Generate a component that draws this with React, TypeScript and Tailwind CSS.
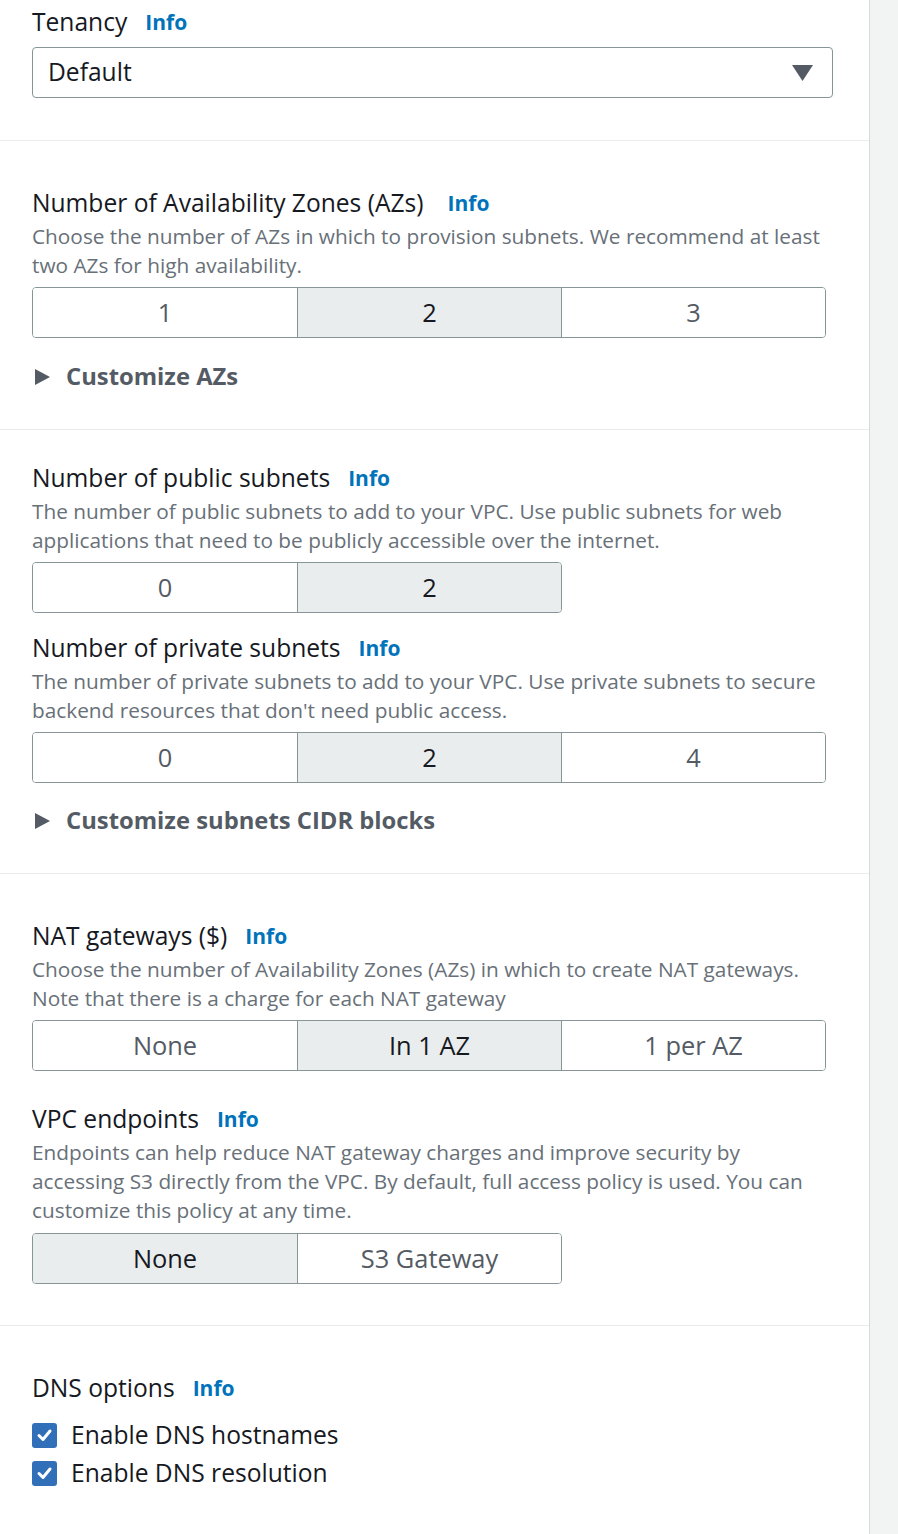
import React, { useState } from 'react';

const font = { fontFamily: '"Open Sans", "Noto Sans", sans-serif' };

function Label({ text, gap = 18 }: { text: string; gap?: number }) {
  return (
    <div className="flex items-center h-[30px]">
      <span className="text-[24.6px] text-[#16191f] leading-[30px]">{text}</span>
      <span
        className={(gap > 18 ? 'ml-[24px]' : 'ml-[18px]') + ' text-[21px] font-bold text-[#0073bb] leading-[30px]'}
      >
        Info
      </span>
    </div>
  );
}

function Desc({ children }: { children: React.ReactNode }) {
  return <p className="mt-[4px] max-w-[794px] text-[20.8px] leading-[29px] text-[#687078]">{children}</p>;
}

function Segmented({ options, selected }: { options: string[]; selected: number }) {
  const [value, setValue] = useState(selected);
  return (
    <div className="flex w-fit border border-[#879596] rounded-[4px] overflow-hidden">
      {options.map((o, i) => (
        <button
          key={o}
          onClick={() => setValue(i)}
          className={
            'w-[264px] h-[49px] text-[25.4px] flex items-center justify-center ' +
            (i > 0 ? 'border-l border-[#879596] ' : '') +
            (i === value ? 'bg-[#eaeded] text-[#16191f]' : 'bg-white text-[#545b64]')
          }
        >
          {o}
        </button>
      ))}
    </div>
  );
}

function Expander({ text }: { text: string }) {
  return (
    <div className="flex items-center h-[30px]">
      <svg width="17" height="18" viewBox="0 0 17 18" className="ml-[2px]">
        <path d="M1 1 L16 9 L1 17 Z" fill="#545b64" />
      </svg>
      <span className="ml-[15px] text-[23.8px] font-bold text-[#545b64]">{text}</span>
    </div>
  );
}

function Checkbox({ label }: { label: string }) {
  const [checked, setChecked] = useState(true);
  return (
    <button onClick={() => setChecked(!checked)} className="flex items-center h-[30px]">
      <span
        className={
          'w-[25px] h-[25px] rounded-[3px] flex items-center justify-center ' +
          (checked ? 'bg-[#3170b9]' : 'border-2 border-[#879596] bg-white')
        }
      >
        {checked && (
          <svg width="17" height="17" viewBox="0 0 17 17">
            <path d="M3 8.5 L7 12.5 L14 4" fill="none" stroke="white" strokeWidth="3" strokeLinecap="round" strokeLinejoin="round" />
          </svg>
        )}
      </span>
      <span className="ml-[14px] text-[24.6px] text-[#16191f]">{label}</span>
    </button>
  );
}

export default function App() {
  return (
    <div className="flex h-[1534px] bg-white" style={font}>
      <div className="w-[869px] shrink-0">
        {/* Tenancy */}
        <div className="px-[32px] pt-[7px] pb-[42px] border-b border-[#eaeded]">
          <Label text="Tenancy" />
          <div className="mt-[10px] w-[801px] h-[51px] border border-[#879596] rounded-[4px] flex items-center justify-between pl-[15px] pr-[19px]">
            <span className="text-[24.6px] text-[#16191f]">Default</span>
            <svg width="21" height="16" viewBox="0 0 21 16">
              <path d="M0 0 H21 L10.5 16 Z" fill="#545b64" />
            </svg>
          </div>
        </div>

        {/* AZs */}
        <div className="px-[32px] pt-[47px] pb-[37px] border-b border-[#eaeded]">
          <Label text="Number of Availability Zones (AZs)" gap={24} />
          <Desc>
            Choose the number of AZs in which to provision subnets. We recommend at least two AZs for high
            availability.
          </Desc>
          <div className="mt-[7px]">
            <Segmented options={['1', '2', '3']} selected={1} />
          </div>
          <div className="mt-[24px]">
            <Expander text="Customize AZs" />
          </div>
        </div>

        {/* Subnets */}
        <div className="px-[32px] pt-[33px] pb-[37px] border-b border-[#eaeded]">
          <Label text="Number of public subnets" />
          <Desc>
            The number of public subnets to add to your VPC. Use public subnets for web applications that need to
            be publicly accessible over the internet.
          </Desc>
          <div className="mt-[7px]">
            <Segmented options={['0', '2']} selected={1} />
          </div>
          <div className="mt-[20px]">
            <Label text="Number of private subnets" />
          </div>
          <Desc>
            The number of private subnets to add to your VPC. Use private subnets to secure backend resources that
            don't need public access.
          </Desc>
          <div className="mt-[7px]">
            <Segmented options={['0', '2', '4']} selected={1} />
          </div>
          <div className="mt-[23px]">
            <Expander text="Customize subnets CIDR blocks" />
          </div>
        </div>

        {/* NAT + endpoints */}
        <div className="px-[32px] pt-[47px] pb-[41px] border-b border-[#eaeded]">
          <Label text="NAT gateways ($)" />
          <Desc>
            Choose the number of Availability Zones (AZs) in which to create NAT gateways. Note that there is a
            charge for each NAT gateway
          </Desc>
          <div className="mt-[7px]">
            <Segmented options={['None', 'In 1 AZ', '1 per AZ']} selected={1} />
          </div>
          <div className="mt-[33px]">
            <Label text="VPC endpoints" />
          </div>
          <Desc>
            Endpoints can help reduce NAT gateway charges and improve security by accessing S3 directly from the
            VPC. By default, full access policy is used. You can customize this policy at any time.
          </Desc>
          <div className="mt-[8px]">
            <Segmented options={['None', 'S3 Gateway']} selected={0} />
          </div>
        </div>

        {/* DNS */}
        <div className="px-[32px] pt-[47px]">
          <Label text="DNS options" />
          <div className="mt-[17px] flex flex-col gap-[8px]">
            <Checkbox label="Enable DNS hostnames" />
            <Checkbox label="Enable DNS resolution" />
          </div>
        </div>
      </div>
      <div className="flex-1 border-l border-[#d5dbdb] bg-[#f2f3f3]" />
    </div>
  );
}
